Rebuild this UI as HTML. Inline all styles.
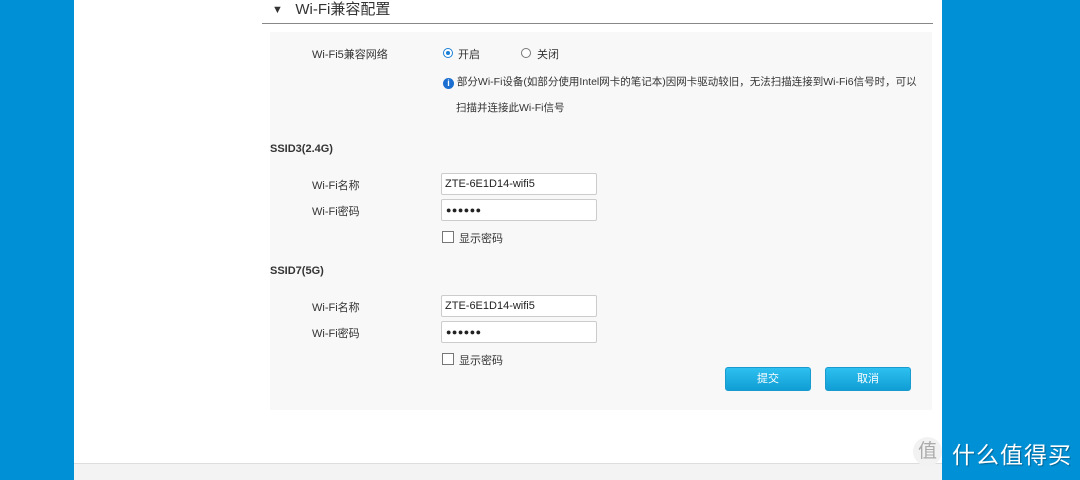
<!DOCTYPE html>
<html><head><meta charset="utf-8"><style>
body{margin:0;width:1080px;height:479px;overflow:hidden;background:#0090d5;font-family:"Liberation Sans","Noto Sans CJK SC",sans-serif;font-size:11px;color:#333;position:relative}
.main{position:absolute;left:74px;top:0;width:868px;height:479px;background:#fff}
.foot{position:absolute;left:74px;top:463px;width:868px;height:16px;background:#f3f3f3;border-top:1px solid #ddd}
.hd{position:absolute;left:272px;top:-2px;font-size:15px;color:#333}
.line{position:absolute;left:262px;top:23px;width:671px;height:1px;background:#888}
.panel{position:absolute;left:270px;top:32px;width:662px;height:378px;background:#f8f8f8}
.a{position:absolute;white-space:nowrap}
.inp{position:absolute;left:441px;width:156px;height:22px;border:1px solid #ccc;border-radius:2px;background:#fff;box-sizing:border-box;padding-left:3px;line-height:20px;font-size:11px;color:#222}
.pw{font-size:9px;letter-spacing:0.5px;padding-left:4px}
.cb{position:absolute;left:442px;width:10px;height:10px;border:1px solid #777;background:#fff}
.btn{position:absolute;top:367px;width:86px;height:24px;border-radius:3px;background:linear-gradient(#2ec0f0,#109ed4);border:1px solid #1a9bd0;box-sizing:border-box;color:#fff;text-align:center;line-height:22px;font-size:11px}
.rad{position:absolute;width:10px;height:10px;border-radius:50%;border:1px solid #777;background:#fff;box-sizing:border-box}
</style></head><body>
<div class="main"></div>
<div class="foot"></div>
<div class="hd"><span style="font-size:11px;vertical-align:1px">▼</span>&nbsp;&nbsp; Wi-Fi兼容配置</div>
<div class="line"></div>
<div class="panel"></div>
<div class="a" style="left:312px;top:46px">Wi-Fi5兼容网络</div>
<div class="rad" style="left:443px;top:48px;border:1px solid #1a7fd6"><div style="position:absolute;left:2px;top:2px;width:4px;height:4px;border-radius:50%;background:#1a7fd6"></div></div>
<div class="a" style="left:458px;top:46px">开启</div>
<div class="rad" style="left:521px;top:48px"></div>
<div class="a" style="left:537px;top:46px">关闭</div>
<div class="a" style="left:443px;top:74px;font-size:10.5px"><span style="display:inline-block;width:11px;height:11px;border-radius:50%;background:#1a6fd0;color:#fff;font-size:9px;text-align:center;line-height:11px;font-weight:bold;vertical-align:-1px">i</span> 部分Wi-Fi设备(如部分使用Intel网卡的笔记本)因网卡驱动较旧，无法扫描连接到Wi-Fi6信号时，可以</div>
<div class="a" style="left:456px;top:100px;font-size:10.5px">扫描并连接此Wi-Fi信号</div>
<div class="a" style="left:270px;top:143px;font-weight:bold">SSID3(2.4G)</div>
<div class="a" style="left:312px;top:177px">Wi-Fi名称</div>
<div class="inp" style="top:173px">ZTE-6E1D14-wifi5</div>
<div class="a" style="left:312px;top:203px">Wi-Fi密码</div>
<div class="inp pw" style="top:199px">●●●●●●</div>
<div class="cb" style="top:231px"></div>
<div class="a" style="left:459px;top:230px">显示密码</div>
<div class="a" style="left:270px;top:265px;font-weight:bold">SSID7(5G)</div>
<div class="a" style="left:312px;top:299px">Wi-Fi名称</div>
<div class="inp" style="top:295px">ZTE-6E1D14-wifi5</div>
<div class="a" style="left:312px;top:325px">Wi-Fi密码</div>
<div class="inp pw" style="top:321px">●●●●●●</div>
<div class="cb" style="top:353px"></div>
<div class="a" style="left:459px;top:352px">显示密码</div>
<div class="btn" style="left:725px">提交</div>
<div class="btn" style="left:825px">取消</div>
<div class="a" style="left:913px;top:437px;width:29px;height:29px;border-radius:50%;background:#f2f2f2;color:#aaa;font-size:19px;text-align:center;line-height:29px">值</div>
<div class="a" style="left:952px;top:436px;color:#fff;font-size:23px;letter-spacing:1px;text-shadow:1px 1px 1px rgba(0,0,0,.3)">什么值得买</div>
</body></html>
